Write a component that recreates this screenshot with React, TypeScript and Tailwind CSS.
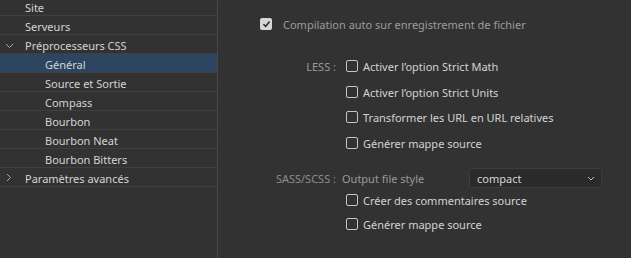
import { useState } from "react";

type Item = { label: string; level: 0 | 1; chevron?: "down" | "right"; active?: boolean };

const items: Item[] = [
  { label: "Site", level: 0 },
  { label: "Serveurs", level: 0 },
  { label: "Préprocesseurs CSS", level: 0, chevron: "down" },
  { label: "Général", level: 1, active: true },
  { label: "Source et Sortie", level: 1 },
  { label: "Compass", level: 1 },
  { label: "Bourbon", level: 1 },
  { label: "Bourbon Neat", level: 1 },
  { label: "Bourbon Bitters", level: 1 },
  { label: "Paramètres avancés", level: 0, chevron: "right" },
];

const Chevron = ({ dir }: { dir: "down" | "right" }) =>
  dir === "down" ? (
    <svg width="9" height="6" viewBox="0 0 9 6" className="absolute left-[5px] top-[8px]">
      <path d="M1 1l3.5 3.5L8 1" fill="none" stroke="#a8a8a8" strokeWidth="1" />
    </svg>
  ) : (
    <svg width="6" height="9" viewBox="0 0 6 9" className="absolute left-[6px] top-[5px]">
      <path d="M1 1l3.5 3.5L1 8" fill="none" stroke="#a8a8a8" strokeWidth="1" />
    </svg>
  );

const Box = ({ checked }: { checked?: boolean }) =>
  checked ? (
    <span className="flex h-[12px] w-[12px] shrink-0 items-center justify-center rounded-[2px] bg-[#d6d6d6]">
      <svg width="9" height="8" viewBox="0 0 9 8">
        <path d="M1.5 4.2l2.2 2.2L7.6 1.6" fill="none" stroke="#2a2a2a" strokeWidth="1.6" />
      </svg>
    </span>
  ) : (
    <span className="h-[12px] w-[12px] shrink-0 rounded-[2px] border border-[#c4c4c4]" />
  );

const Option = ({ label, className = "" }: { label: string; className?: string }) => (
  <div className={`flex h-[12px] items-center gap-[5px] ${className}`}>
    <Box />
    <span className="text-[#d2d2d2]">{label}</span>
  </div>
);

export default function App() {
  const [style] = useState("compact");

  return (
    <div
      className="flex h-[258px] w-[631px] overflow-hidden bg-[#323232] text-[11px] leading-none"
      style={{ fontFamily: '"Segoe UI", "Noto Sans", sans-serif' }}
    >
      {/* Arbre des préférences */}
      <div className="w-[218px] shrink-0 border-r border-[#464646]">
        <div className="-mt-[3px]">
          {items.map((it) => (
            <div
              key={it.label}
              className={`relative flex h-[19px] items-center border-b border-[#3f3f3f] ${
                it.active ? "bg-[#2c4560]" : ""
              } ${it.level === 0 ? "pl-[25px]" : "pl-[45px]"}`}
            >
              {it.chevron && <Chevron dir={it.chevron} />}
              <span className="pt-[2px] text-[#d4d4d4]">{it.label}</span>
            </div>
          ))}
        </div>
      </div>

      {/* Panneau Général */}
      <div className="flex-1 pl-[42px] pt-[18px]">
        <div className="flex h-[12px] items-center gap-[11px]">
          <Box checked />
          <span className="text-[#9c9c9c]">Compilation auto sur enregistrement de fichier</span>
        </div>

        <div className="mt-[30px] flex">
          <div className="flex h-[12px] w-[86px] items-center justify-end pr-[10px] text-[#9a9a9a]">LESS :</div>
          <div className="flex flex-col">
            <Option label="Activer l’option Strict Math" />
            <Option label="Activer l’option Strict Units" className="mt-[14px]" />
            <Option label="Transformer les URL en URL relatives" className="mt-[13px]" />
            <Option label="Générer mappe source" className="mt-[14px]" />
          </div>
        </div>

        <div className="mt-[19px] flex items-center">
          <div className="w-[82px] pr-[6px] text-right text-[#8c8c8c]">SASS/SCSS :</div>
          <div className="w-[127px] text-[#9a9a9a]">Output file style</div>
          <div className="flex h-[20px] w-[133px] items-center justify-between rounded-[3px] border border-[#3d3d3d] bg-[#2a2a2a] pl-[7px] pr-[6px]">
            <span className="text-[#d6d6d6]">{style}</span>
            <svg width="8" height="5" viewBox="0 0 8 5">
              <path d="M1 1l3 3 3-3" fill="none" stroke="#bdbdbd" strokeWidth="1" />
            </svg>
          </div>
        </div>

        <div className="ml-[86px] mt-[6px] flex flex-col">
          <Option label="Créer des commentaires source" />
          <Option label="Générer mappe source" className="mt-[12px]" />
        </div>
      </div>
    </div>
  );
}
